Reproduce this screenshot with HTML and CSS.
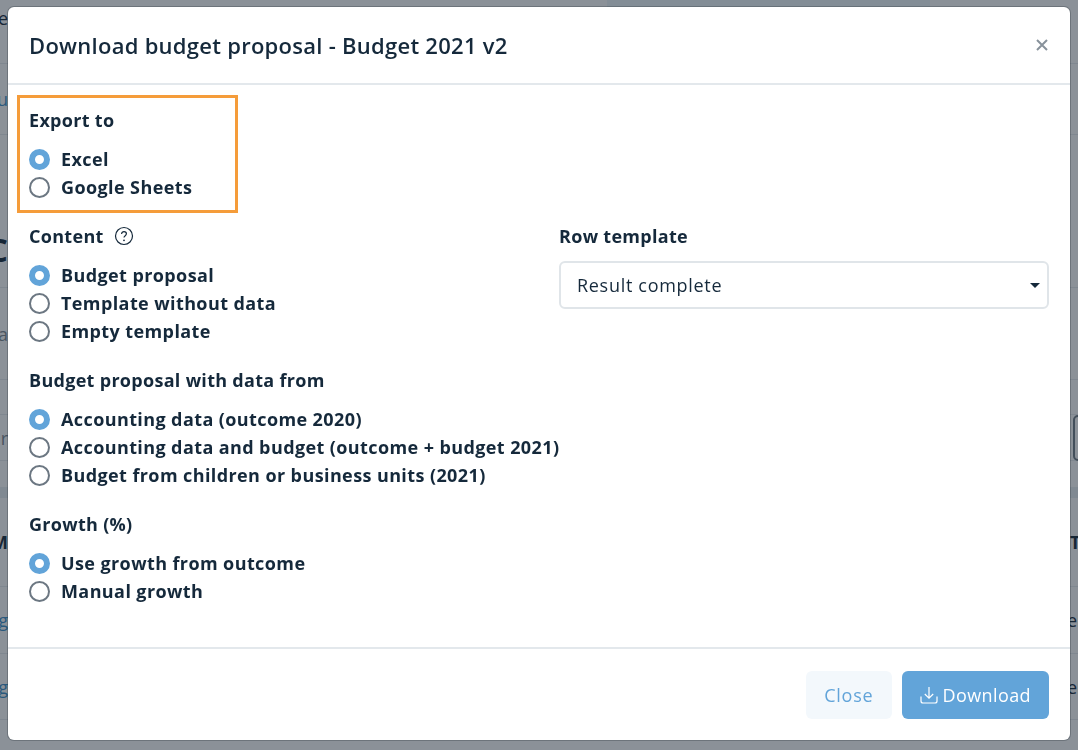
FILE: index.html
```html
<!DOCTYPE html>
<html lang="en">
<head>
  <meta charset="UTF-8" />
  <title>Download budget proposal</title>
  <link rel="stylesheet" href="styles.css">
</head>
<body>
  <!-- page behind the dialog, only the edges show -->
  <div class="page">
    <div class="row row-top"><span class="edge-l">Te</span><span class="tab"></span><span class="edge-r"></span></div>
    <div class="row row-line h28"></div>
    <div class="row row-line h71"><span class="edge-l link">Nu</span></div>
    <div class="row h77"></div>
    <div class="row row-line h76"><span class="edge-l big">C</span></div>
    <div class="row row-line h92"><span class="edge-l muted">da</span></div>
    <div class="row row-line h35"></div>
    <div class="row row-line h46"><span class="edge-l muted">r</span><span class="spacer"></span><span class="edge-r"><span class="box"></span></span></div>
    <div class="row h26"></div>
    <div class="row band h11"></div>
    <div class="row row-line h89"><span class="edge-l strong">M</span><span class="spacer"></span><span class="edge-r strong">T</span></div>
    <div class="row row-line h67"><span class="edge-l link">g</span><span class="spacer"></span><span class="edge-r tail">el</span></div>
    <div class="row row-line h66"><span class="edge-l link">g</span><span class="spacer"></span><span class="edge-r tail">el</span></div>
  </div>

  <div class="overlay">
    <div class="modal">
      <header class="modal-header">
        <h1>Download budget proposal - Budget 2021 v2</h1>
        <button class="close-x" aria-label="Close">
          <svg width="12" height="12" viewBox="0 0 12 12"><path d="M1 1l10 10M11 1L1 11" stroke="currentColor" stroke-width="2" fill="none"/></svg>
        </button>
      </header>

      <div class="modal-body">
        <div class="highlight">
          <div class="group-label">Export to</div>
          <label class="radio"><input type="radio" name="export" checked> Excel</label>
          <label class="radio"><input type="radio" name="export"> Google Sheets</label>
        </div>

        <div class="columns">
          <div>
            <div class="group-label">Content
              <svg class="help" width="20" height="20" viewBox="0 0 20 20">
                <circle cx="10" cy="10" r="8.5" fill="none" stroke="currentColor" stroke-width="1.2"/>
                <path d="M7.6 7.9c0-1.4 1.1-2.3 2.4-2.3s2.4.9 2.4 2.2c0 1.1-.7 1.6-1.4 2.1-.7.5-1 .9-1 1.7" fill="none" stroke="currentColor" stroke-width="1.2"/>
                <circle cx="10" cy="14.3" r=".9" fill="currentColor"/>
              </svg>
            </div>
            <label class="radio"><input type="radio" name="content" checked> Budget proposal</label>
            <label class="radio"><input type="radio" name="content"> Template without data</label>
            <label class="radio"><input type="radio" name="content"> Empty template</label>
          </div>
          <div>
            <div class="group-label">Row template</div>
            <div class="select-wrap">
              <select>
                <option>Result complete</option>
              </select>
            </div>
          </div>
        </div>

        <div class="group">
          <div class="group-label">Budget proposal with data from</div>
          <label class="radio"><input type="radio" name="source" checked> Accounting data (outcome 2020)</label>
          <label class="radio"><input type="radio" name="source"> Accounting data and budget (outcome + budget 2021)</label>
          <label class="radio"><input type="radio" name="source"> Budget from children or business units (2021)</label>
        </div>

        <div class="group">
          <div class="group-label">Growth (%)</div>
          <label class="radio"><input type="radio" name="growth" checked> Use growth from outcome</label>
          <label class="radio"><input type="radio" name="growth"> Manual growth</label>
        </div>
      </div>

      <footer class="modal-footer">
        <button class="btn btn-light">Close</button>
        <button class="btn btn-primary">
          <svg width="18" height="18" viewBox="0 0 18 18" fill="none" stroke="currentColor" stroke-width="1.2">
            <path d="M9 1v11M4.8 8l4.2 4.2L13.200 8"/>
            <path d="M1 10.500v4.500a2 2 0 0 0 2 2h12a2 2 0 0 0 2-2v-4.500"/>
          </svg>
          Download
        </button>
      </footer>
    </div>
  </div>
</body>
</html>
```

FILE: styles.css
```css
* {
  box-sizing: border-box;
}
html, body {
  height: 100%;
}
body {
  margin: 0;
  overflow: hidden;
  background: #fff;
  color: #15293b;
  font-family: 'Open Sans', 'Lato', sans-serif;
}

/* page behind the dialog */
.page {
  height: 750px;
  overflow: hidden;
  font-size: 18px;
}
.row {
  display: flex;
  align-items: center;
  height: 36px;
}
.row-line {
  border-bottom: 1px solid #e6eaee;
}
.h11 { height: 11px; }
.h26 { height: 26px; }
.h28 { height: 28px; }
.h35 { height: 35px; }
.h46 { height: 46px; }
.h66 { height: 66px; }
.h67 { height: 67px; }
.h71 { height: 71px; }
.h76 { height: 76px; }
.h77 { height: 77px; }
.h89 { height: 89px; }
.h92 { height: 92px; }
.band {
  background: #e9eef2;
}
.edge-l {
  display: flex;
  justify-content: flex-end;
  flex: 0 0 8px;
  overflow: hidden;
  white-space: nowrap;
}
.edge-r {
  margin-left: auto;
  flex: 0 0 8px;
  overflow: hidden;
  white-space: nowrap;
}
.tail {
  text-indent: -3px;
}
.spacer {
  flex: 1;
}
.tab {
  align-self: flex-start;
  width: 323px;
  height: 10px;
  margin-left: 599px;
  background: #eef6fa;
}
.link { color: #3d8fc9; }
.muted { color: #7b8790; }
.strong { font-weight: 700; }
.big { font-size: 32px; font-weight: 700; }
.box {
  display: block;
  width: 30px;
  height: 46px;
  margin-left: 3px;
  border: 2px solid #6f7a84;
  border-radius: 5px;
}

/* dialog */
.overlay {
  position: fixed;
  top: 0;
  left: 0;
  width: 100%;
  height: 100%;
  padding: 7px 8px 10px;
  background: rgba(24, 36, 50, 0.5);
}
.modal {
  display: flex;
  flex-direction: column;
  height: 733px;
  background: #fff;
  border-radius: 6px;
  box-shadow: 0 0 0 1px rgba(20, 30, 40, 0.25);
}
.modal-header {
  display: flex;
  align-items: center;
  justify-content: space-between;
  height: 78px;
  padding: 0 22px 0 21px;
  border-bottom: 2px solid #e3e8ec;
}
.modal-header h1 {
  margin: 0;
  font-size: 22px;
  font-weight: 600;
  letter-spacing: 0.27px;
}
.close-x {
  display: flex;
  padding: 0;
  border: none;
  background: none;
  color: #88929b;
}
.modal-body {
  flex: 1;
  padding: 10px 21px 0;
}
.highlight {
  margin: 0 -12px 11px;
  width: 221px;
  padding: 10px 9px 9px;
  border: 3px solid #f59c3a;
}
.group-label {
  display: flex;
  align-items: center;
  gap: 10px;
  height: 24px;
  margin-bottom: 13px;
  font-size: 18px;
  font-weight: 700;
  letter-spacing: 0.3px;
}
.help {
  color: #15293b;
}
.radio {
  display: flex;
  align-items: center;
  gap: 11px;
  height: 28px;
  font-size: 18px;
  font-weight: 700;
  letter-spacing: 0.4px;
  white-space: nowrap;
}
.radio input {
  appearance: none;
  flex: none;
  width: 21px;
  height: 21px;
  margin: 0;
  border: 2px solid #6c7782;
  border-radius: 50%;
  background: #fff;
}
.radio input:checked {
  border: 6.5px solid #62a4d9;
}
.columns {
  display: grid;
  grid-template-columns: 530px 1fr;
}
.group {
  margin-top: 23px;
}
.select-wrap {
  position: relative;
}
.select-wrap::after {
  content: "";
  position: absolute;
  top: 22px;
  right: 9px;
  border-top: 5px solid #15293b;
  border-left: 5px solid transparent;
  border-right: 5px solid transparent;
}
select {
  appearance: none;
  display: block;
  width: 100%;
  height: 48px;
  padding: 0 16px;
  border: 2px solid #e0e5e9;
  border-radius: 6px;
  background: #fff;
  color: #15293b;
  font-family: inherit;
  font-size: 18px;
  letter-spacing: 0.7px;
}
.modal-footer {
  display: flex;
  justify-content: flex-end;
  gap: 10px;
  height: 93px;
  padding: 22px 21px 21px;
  border-top: 2px solid #e3e8ec;
}
.btn {
  display: flex;
  align-items: center;
  gap: 5px;
  height: 48px;
  padding: 0 18px;
  border: none;
  border-radius: 6px;
  font-family: inherit;
  font-size: 18px;
  letter-spacing: 0.4px;
}
.btn-light {
  background: #f3f8fc;
  color: #62a4d9;
  letter-spacing: 0.8px;
}
.btn-primary {
  background: #62a4d9;
  color: #fff;
}
```
